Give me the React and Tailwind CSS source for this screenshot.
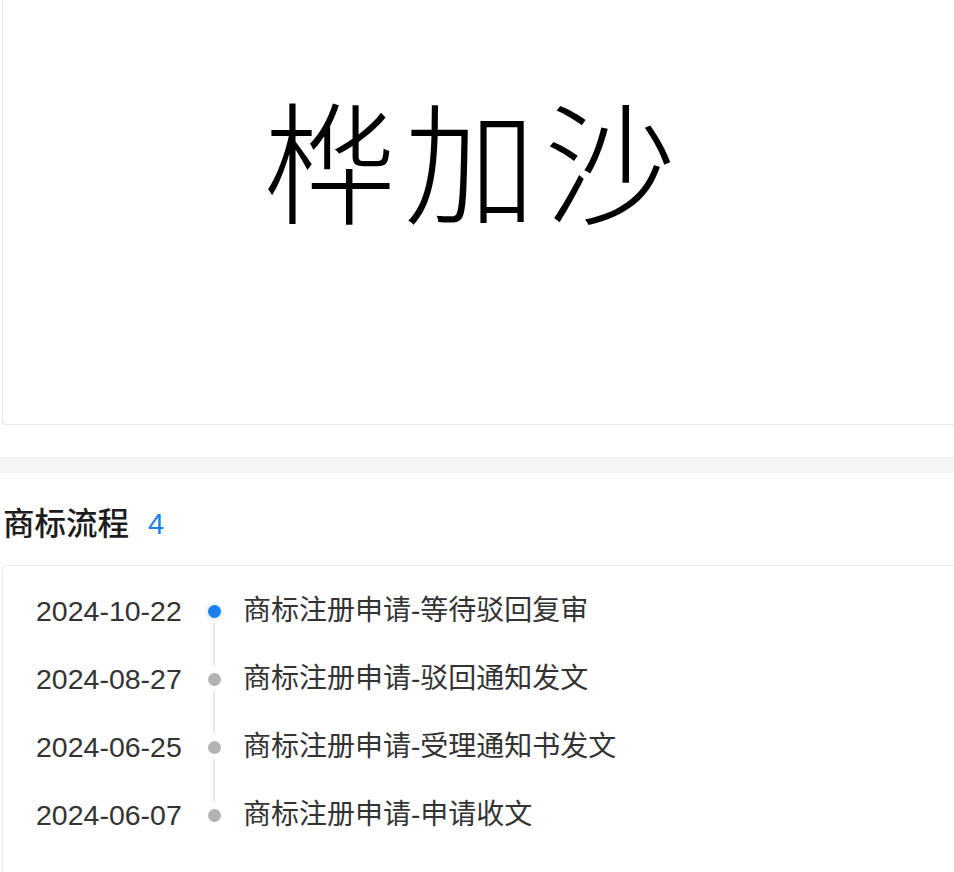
import React from 'react';

const flow = [
  { date: '2024-10-22', text: '商标注册申请-等待驳回复审', active: true },
  { date: '2024-08-27', text: '商标注册申请-驳回通知发文' },
  { date: '2024-06-25', text: '商标注册申请-受理通知书发文' },
  { date: '2024-06-07', text: '商标注册申请-申请收文' },
];

const sans = { fontFamily: '"Liberation Sans", "Noto Sans CJK SC", sans-serif' };

export default function App() {
  return (
    <div className="w-[954px] h-[872px] overflow-hidden bg-white" style={sans}>
      {/* trademark image */}
      <div className="ml-[2px] w-[980px] h-[425px] border-l border-b border-[#e9e9e9] rounded-bl-[4px] pl-[261px] pt-[76px]">
        <div
          className="text-[132px] leading-[162px] text-black font-light tracking-[8px]"
          style={{ fontFamily: '"Noto Sans CJK SC", sans-serif' }}
        >
          桦加沙
        </div>
      </div>

      <div className="h-[32px]" />
      <div className="h-[16px] bg-[#f5f5f5]" />

      {/* header */}
      <div className="mt-[32px] h-[40px] flex items-center pl-[3px]">
        <span className="text-[31.5px] font-medium text-[#1c1c1c]">商标流程</span>
        <span className="ml-[19px] text-[29px] text-[#1a7fe8]">4</span>
      </div>

      {/* flow card */}
      <div className="mt-[20px] ml-[2px] w-[980px] h-[400px] border-l border-t border-[#ececec] rounded-tl-[4px] pt-[11px] pl-[33px]">
        {flow.map((item, i) => (
          <div key={item.date} className="flex items-center h-[68px]">
            <div className="w-[150px] text-[28.5px] text-[#333]">{item.date}</div>
            <div className="relative w-[56px] h-full flex items-center justify-center">
              <span
                className={
                  item.active
                    ? 'w-[13px] h-[13px] rounded-full bg-[#1a7ff0] shadow-[0_0_0_3px_rgba(26,127,240,0.08)]'
                    : 'w-[13px] h-[13px] rounded-full bg-[#b3b3b3]'
                }
              />
              {i < flow.length - 1 && (
                <span className="absolute left-[27px] top-[46px] w-[2px] h-[42px] bg-[#e8e8e8]" />
              )}
            </div>
            <div className="ml-[1px] text-[28px] text-[#333]">{item.text}</div>
          </div>
        ))}
      </div>
    </div>
  );
}
